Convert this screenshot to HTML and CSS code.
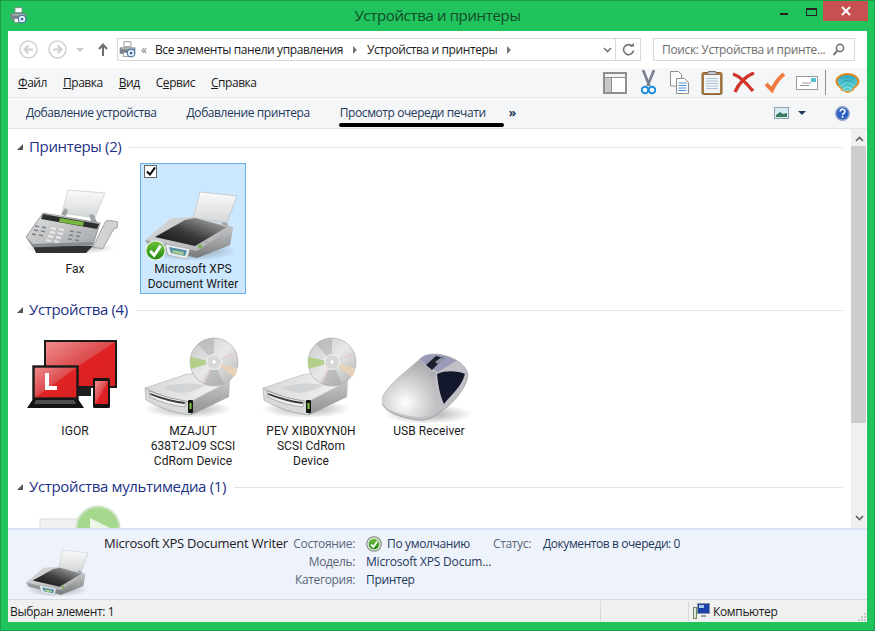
FILE: index.html
```html
<!DOCTYPE html>
<html lang="ru">
<head>
    <meta charset="UTF-8">
    <title>Устройства и принтеры</title>
    <link rel="stylesheet" href="styles.css">
</head>
<body>

<svg class="defs" width="0" height="0">
    <defs>
        <linearGradient id="paper" x1="0" y1="0" x2="0" y2="1"><stop offset="0" stop-color="#fbfbfb"/><stop offset="1" stop-color="#d3d6d8"/></linearGradient>
        <linearGradient id="printer-top" x1="0" y1="0" x2="1" y2="1"><stop offset="0" stop-color="#dcddde"/><stop offset="1" stop-color="#a2a5a8"/></linearGradient>
        <linearGradient id="printer-front" x1="0" y1="0" x2="0" y2="1"><stop offset="0" stop-color="#c4c6c8"/><stop offset="1" stop-color="#77797b"/></linearGradient>
        <linearGradient id="printer-well" x1="1" y1="0" x2="0" y2="1"><stop offset="0" stop-color="#b5b6b7"/><stop offset=".55" stop-color="#3a3a3a"/><stop offset="1" stop-color="#0c0c0c"/></linearGradient>
        <linearGradient id="fax-top" x1="0" y1="0" x2="1" y2="1"><stop offset="0" stop-color="#e2e3e4"/><stop offset="1" stop-color="#a0a3a6"/></linearGradient>
        <linearGradient id="red" x1="0" y1="0" x2="1" y2="1"><stop offset="0" stop-color="#ef8f8f"/><stop offset=".5" stop-color="#dc4a4c"/><stop offset=".51" stop-color="#e02325"/><stop offset="1" stop-color="#d81f22"/></linearGradient>
        <linearGradient id="drive-top" x1="0" y1="0" x2="1" y2="0"><stop offset="0" stop-color="#d7d8d8"/><stop offset="1" stop-color="#f4f4f4"/></linearGradient>
        <linearGradient id="drive-side" x1="0" y1="0" x2="0" y2="1"><stop offset="0" stop-color="#c6c7c7"/><stop offset="1" stop-color="#8e9090"/></linearGradient>
        <linearGradient id="disc" x1="0" y1="0" x2="1" y2="1"><stop offset="0" stop-color="#c8c8c8"/><stop offset=".5" stop-color="#e8e8e8"/><stop offset="1" stop-color="#b0b0b0"/></linearGradient>
        <radialGradient id="mouse-body" cx=".4" cy=".75" r=".8"><stop offset="0" stop-color="#ffffff"/><stop offset=".3" stop-color="#e2e2e2"/><stop offset="1" stop-color="#a4a4a8"/></radialGradient>
        <linearGradient id="green" x1="0" y1="0" x2="0" y2="1"><stop offset="0" stop-color="#6ec23a"/><stop offset="1" stop-color="#1f8a12"/></linearGradient>
        <linearGradient id="shell" x1="0" y1="0" x2="0" y2="1"><stop offset="0" stop-color="#2aa8c0"/><stop offset="1" stop-color="#80e8e0"/></linearGradient>
        <radialGradient id="blur-shadow"><stop offset="0" stop-color="#000" stop-opacity=".35"/><stop offset="1" stop-color="#000" stop-opacity="0"/></radialGradient>

        <symbol id="check-badge" viewBox="0 0 24 24">
            <circle cx="12" cy="12" r="11" fill="url(#green)" stroke="#e7f3df" stroke-width="1.4"/>
            <path d="M6 12.500l4.500 5L18 6.500" fill="none" stroke="#fff" stroke-width="3.400"/>
        </symbol>

        <symbol id="check-ring" viewBox="0 0 24 24">
            <circle cx="12" cy="12" r="11" fill="#dfe3dc" stroke="#7d8a7a" stroke-width="1.600"/>
            <circle cx="12" cy="12" r="8" fill="url(#green)"/>
            <path d="M7.500 12.500l3.500 4 6-8.500" fill="none" stroke="#fff" stroke-width="2.800"/>
        </symbol>

        <symbol id="printer" viewBox="0 0 92 72">
            <ellipse cx="46" cy="62" rx="46" ry="10" fill="url(#blur-shadow)"/>
            <path d="M50 25l-5 13 6 1 4-12zM79 28l5 10-5 2-4-11z" fill="#9da0a2"/>
            <path d="M55 3L92 7 82 34 48 29z" fill="url(#paper)" stroke="#b7babb" stroke-width=".6"/>
            <path d="M0 51L26 29 48 28 88 38 85 56 52 69 4 57z" fill="url(#printer-top)"/>
            <path d="M4 57L0 51 52 62 88 38 85 56 52 69z" fill="url(#printer-front)"/>
            <path d="M10 48L40 31 50 29 82 38 50 57z" fill="url(#printer-well)"/>
            <path d="M20 55L45 60 42 70 23 66z" fill="#e9edf0" stroke="#8a8a8a" stroke-width=".4"/>
            <path d="M24 58L42 61.500 40 67 26 64z" fill="#4f8fa8"/>
            <path d="M27 61L39 63 38 66 28 64z" fill="#a9c98a"/>
            <circle cx="55" cy="57.500" r="2" fill="#7ab04a"/>
            <circle cx="62" cy="53.500" r="1.800" fill="#a8abad"/>
        </symbol>

        <symbol id="fax" viewBox="0 0 92 66">
            <ellipse cx="44" cy="60" rx="46" ry="6" fill="url(#blur-shadow)"/>
            <path d="M42 2L79 5 69 30 36 25z" fill="url(#paper)" stroke="#c0c2c3" stroke-width=".6"/>
            <path d="M39 20l-4 7 5 1 2-6zM67 26l4 8-5 1-3-8z" fill="#9fa2a4"/>
            <path d="M6 56L67 58 60 65 10 65z" fill="#2f3132"/>
            <path d="M0 49L17 25 74 35 67 57 7 59z" fill="url(#fax-top)" stroke="#7d8082" stroke-width=".7"/>
            <path d="M1 50L7 56 67 54 67 57 7 59z" fill="#8a8d90"/>
            <path d="M17 26L73 36 71 41 15 31z" fill="#2b2f2e"/>
            <path d="M34 30L58 34 57 38 33 34z" fill="#79b63f"/>
            <path d="M9 38l4 .7M16 39l4 .7M8 42l4 .7M15 43l4 .7M6 46l4 .7M13 47l4 .7" stroke="#7d8184" stroke-width="1.500"/>
            <path d="M25 40l5 1M33 41l5 1M24 44l5 1M32 45l5 1M22 48l5 1M30 49l5 1M20 52l5 1M28 53l5 1" stroke="#e8eaeb" stroke-width="1.800"/>
            <path d="M44 43l4 .7M51 44l4 .7M43 47l4 .7M50 48l4 .7M42 51l4 .7M49 52l4 .7" stroke="#7d8184" stroke-width="1.300"/>
            <path d="M80 33c4-1 8 0 12 1l-1 6-3 .5-11 20-10-1 6-13 4-8z" fill="#d0d2d3" stroke="#85888b" stroke-width=".7"/>
        </symbol>

        <symbol id="devices" viewBox="0 0 90 70">
            <rect x="18" y="1" width="71" height="46" fill="url(#red)" stroke="#1a1a1a" stroke-width="2"/>
            <path d="M44 47h20v9H44z" fill="#202020"/>
            <rect x="6.500" y="26.500" width="44" height="32" fill="url(#red)" stroke="#1a1a1a" stroke-width="2.400"/>
            <path d="M18 33h4v13h8v4H18z" fill="#fff"/>
            <path d="M6 59h45l6 9H0z" fill="#141414"/>
            <path d="M9 60h38l2 4H7z" fill="#4d4d4d"/>
            <rect x="66" y="38" width="17" height="30" rx="1.500" fill="#141414"/>
            <rect x="68" y="41" width="13" height="23" fill="url(#red)"/>
        </symbol>

        <symbol id="cd-drive" viewBox="0 0 96 86">
            <ellipse cx="44" cy="74" rx="44" ry="9" fill="url(#blur-shadow)"/>
            <path d="M1 53L43 39Q70 37 86 46L46 67Q20 64 1 53z" fill="url(#drive-top)" stroke="#a6a8a8" stroke-width=".5"/>
            <path d="M20 52Q42 46 62 50 48 58 38 58 26 57 20 52z" fill="#c4c8cc" opacity=".6"/>
            <path d="M46 67L86 46 85 62 47 80z" fill="url(#drive-side)"/>
            <path d="M1 53Q20 64 46 67L47 80Q22 77 2 65z" fill="#d8d9d9" stroke="#8b8d8d" stroke-width=".5"/>
            <path d="M5 56Q24 64 42 66L41 72Q22 70 6 62z" fill="#f0f0f0" stroke="#777" stroke-width=".5"/>
            <path d="M6 58Q24 65 41 67L40.500 69Q24 67 6.500 60z" fill="#3a3c3c"/>
            <rect x="44" y="65" width="5" height="13" rx="1" fill="#151515"/>
            <rect x="45.500" y="68" width="2" height="6" fill="#7ccc3f"/>
            <circle cx="70" cy="27" r="24" fill="url(#disc)" stroke="#a2a2a2" stroke-width=".6"/>
            <path d="M70 27L46 22C46 26 46 30 47 34z" fill="#b4cf8a"/>
            <path d="M70 27L93 33C93 37 92 40 90 42z" fill="#e6d2b8"/>
            <path d="M70 27L54 9C58 6 64 3 70 3z" fill="#a8a8a8" opacity=".5"/>
            <path d="M70 27L60 49C66 51 74 51 80 49z" fill="#a0a0a0" opacity=".5"/>
            <path d="M70 27l23-9M70 27L59 48" stroke="#e6bcd0" stroke-width=".8"/>
            <circle cx="70" cy="27" r="7.500" fill="#d8d8d8" stroke="#f4f4f4" stroke-width="1"/>
            <circle cx="70" cy="27" r="2.400" fill="#fff" stroke="#b5b5b5" stroke-width=".5"/>
        </symbol>

        <symbol id="mouse-icon" viewBox="0 0 92 84">
            <ellipse cx="46" cy="70" rx="44" ry="10" fill="url(#blur-shadow)"/>
            <path d="M0 55C4 42 24 28 38 15 44 8 60 9 72 15 82 20 88 28 85 36 80 50 68 62 58 68 50 74 44 77 36 76 20 74-2 68 0 55z" fill="#c0c0c6" stroke="#8a8a90" stroke-width=".6"/>
            <path d="M55 30C64 26 76 27 83 30 80 42 70 50 62 60 58 52 56 40 55 30z" fill="#14182c"/>
            <path d="M38 15C44 9 62 9 74 17L56 28C50 24 44 22 38 15z" fill="#9a9ab8"/>
            <path d="M44 21L54 12 62 14 50 26z" fill="#1a2030"/>
            <path d="M53 18L59 13.500 63 15 56 20z" fill="#8f94a4"/>
            <path d="M0 55C4 42 24 28 38 16 44 24 50 26 54 29 52 40 54 52 58 62 50 71 44 73 36 73 20 71-2 66 0 55z" fill="url(#mouse-body)"/>
        </symbol>

        <symbol id="media" viewBox="0 0 82 46">
            <path d="M1 14h40v32H1z" fill="#f1f1f1" stroke="#dedede"/>
            <circle cx="59" cy="23" r="21.500" fill="#a6d88e" stroke="#cfe3c4" stroke-width="2"/>
            <path d="M51 13l20 10-20 12z" fill="#edf5e6"/>
        </symbol>

        <symbol id="mini-printer" viewBox="0 0 24 24">
            <path d="M7 1h10v7H7z" fill="#fff" stroke="#777"/>
            <path d="M1 9h22v9H1z" fill="#78828c"/>
            <path d="M3 10h18v2H3z" fill="#aeb5bb"/>
            <path d="M6 16h12v6H6z" fill="#fff" stroke="#777"/>
            <circle cx="17" cy="17" r="5.500" fill="#eaf3fb" stroke="#36689a" stroke-width="1.400"/>
            <circle cx="17" cy="17" r="2" fill="#36689a"/>
        </symbol>
    </defs>
</svg>

<div class="window">
    <div class="titlebar">
        <svg class="title-icon" width="17" height="17"><use href="#mini-printer"/></svg>
        <div class="title-text">Устройства и принтеры</div>
        <div class="window-controls">
            <div class="ctl-min"></div>
            <div class="ctl-max"></div>
            <div class="ctl-close">
                <svg width="10" height="10" viewBox="0 0 10 10"><path d="M1 1l8 8M9 1L1 9" stroke="#fff" stroke-width="2"/></svg>
            </div>
        </div>
    </div>

    <div class="client">
        <div class="navbar">
            <div class="nav-btn">
                <svg width="19" height="19" viewBox="0 0 19 19"><circle cx="9.500" cy="9.500" r="8.500" fill="#fff" stroke="#d0d0d0" stroke-width="1.500"/><path d="M14 9.500H6M9.500 5.500l-4 4 4 4" fill="none" stroke="#cfcfcf" stroke-width="2"/></svg>
            </div>
            <div class="nav-btn">
                <svg width="19" height="19" viewBox="0 0 19 19"><circle cx="9.500" cy="9.500" r="8.500" fill="#fff" stroke="#d0d0d0" stroke-width="1.500"/><path d="M5 9.500h8M9.500 5.500l4 4-4 4" fill="none" stroke="#cfcfcf" stroke-width="2"/></svg>
            </div>
            <div class="nav-drop"></div>
            <svg class="nav-up" width="10" height="13" viewBox="0 0 10 13"><path d="M5 13V2M1 6l4-4.500 4 4.500" fill="none" stroke="#6d6d6d" stroke-width="2"/></svg>

            <div class="address">
                <svg class="addr-icon" width="17" height="17"><use href="#mini-printer"/></svg>
                <span class="addr-more">&laquo;</span>
                <span class="crumb">Все элементы панели управления</span>
                <span class="crumb-arrow"></span>
                <span class="crumb">Устройства и принтеры</span>
                <span class="crumb-arrow"></span>
                <div class="addr-right">
                    <svg class="addr-chevron" width="9" height="6" viewBox="0 0 9 6"><path d="M1 1l3.500 3.500L8 1" fill="none" stroke="#777" stroke-width="1.600"/></svg>
                    <div class="addr-refresh">
                        <svg width="13" height="13" viewBox="0 0 13 13"><path d="M10.500 3.500a5 5 0 1 0 1 4" fill="none" stroke="#777" stroke-width="1.600"/><path d="M7.500 3.500h4.500V0z" fill="#777"/></svg>
                    </div>
                </div>
            </div>

            <div class="search">
                <span class="search-text">Поиск: Устройства и принте...</span>
                <svg width="13" height="13" viewBox="0 0 13 13"><circle cx="8" cy="5" r="3.600" fill="none" stroke="#777" stroke-width="1.600"/><path d="M5.500 7.500L1.500 12" stroke="#777" stroke-width="2"/></svg>
            </div>
        </div>

        <div class="menubar">
            <div class="menu-items">
                <span><u>Ф</u>айл</span>
                <span><u>П</u>равка</span>
                <span><u>В</u>ид</span>
                <span>С<u>е</u>рвис</span>
                <span><u>С</u>правка</span>
            </div>
            <div class="tools">
                <svg class="tool-panel" width="24" height="22" viewBox="0 0 24 22"><rect x="1" y="1" width="22" height="20" fill="#fff" stroke="#8f8f8f" stroke-width="2"/><rect x="2" y="2" width="20" height="4" fill="#f2f2f2"/><rect x="2" y="6" width="6" height="14" fill="#c8c8c8"/><path d="M8.500 6v15M1 5.500h22" stroke="#8f8f8f"/></svg>
                <svg class="tool-cut" width="15" height="25" viewBox="0 0 15 25"><path d="M2 0l6.500 16M13 0L6.500 16" stroke="#76808e" stroke-width="2.600"/><circle cx="4" cy="20" r="3.300" fill="none" stroke="#1d8fdc" stroke-width="2"/><circle cx="11" cy="20" r="3.300" fill="none" stroke="#1d8fdc" stroke-width="2"/></svg>
                <svg class="tool-copy" width="19" height="23" viewBox="0 0 19 23"><path d="M.5.500h8l3 3V15H.5z" fill="#fff" stroke="#8f8f8f"/><path d="M6.500 7.500h8l4 4v11h-12z" fill="#fff" stroke="#8f8f8f"/><path d="M8.500 12h8M8.500 14.500h8M8.500 17h8M8.500 19.500h8" stroke="#4a90d0"/></svg>
                <svg class="tool-paste" width="22" height="25" viewBox="0 0 22 25"><rect x="1" y="2.500" width="20" height="22" rx="1.500" fill="#a77a4a" stroke="#8a6033"/><rect x="3" y="5" width="16" height="18" fill="#f2f4f6"/><path d="M5 8.500h12M5 11h12M5 13.500h12M5 16h12M5 18.500h12" stroke="#aec0d4"/><path d="M7 1.500h8v3H7z" fill="#c9c9c9" stroke="#777"/></svg>
                <svg class="tool-del" width="23" height="21" viewBox="0 0 23 21"><path d="M1 2C7 4 12 8 21 19M22 1C14 4 7 11 3 20" fill="none" stroke="#d0342a" stroke-width="3.400"/></svg>
                <svg class="tool-ok" width="22" height="21" viewBox="0 0 22 21"><path d="M2 12l6 6C11 11 15 6 20 2" fill="none" stroke="#f07a42" stroke-width="4"/></svg>
                <svg class="tool-mail" width="22" height="14" viewBox="0 0 22 14"><rect x=".5" y=".5" width="21" height="13" fill="#fff" stroke="#9a9a9a"/><rect x="15" y="2" width="5" height="4" fill="#53bfd8"/><path d="M6 7h9M4 9.500h9" stroke="#9a9a9a"/></svg>
                <div class="tool-sep"></div>
                <svg class="tool-shell" width="25" height="20" viewBox="0 0 25 20"><path d="M12.500 0C19 0 25 4 24.500 9c-.3 3-3 5-4.500 6-1 2-2.500 3-2.500 3l-5 2-5-2S6 17 5 15C3.500 14 .8 12 .5 9 0 4 6 0 12.500 0z" fill="#e5871b"/><path d="M12.500 2C18 2 23 5 22.500 9c-.3 2-2.500 4-3.500 5l-3 4H9l-3-4C5 13 2.800 11 2.500 9 2 5 7 2 12.500 2z" fill="url(#shell)"/><path d="M4.500 12a9.500 9.500 0 0 1 16 0M7 15a6.500 6.500 0 0 1 11 0M9.500 17.500a3.500 3.500 0 0 1 6 0" fill="none" stroke="#1c93ac" stroke-width=".7"/></svg>
            </div>
        </div>

        <div class="commandbar">
            <span class="cmd">Добавление устройства</span>
            <span class="cmd">Добавление принтера</span>
            <span class="cmd">Просмотр очереди печати</span>
            <span class="cmd-more">&raquo;</span>
            <div class="cmd-right">
                <svg width="15" height="12" viewBox="0 0 15 12"><rect x=".5" y=".5" width="14" height="11" fill="#d9ecf5" stroke="#8fa1ad"/><path d="M2 8l4-3 3 2 4-1v4H2z" fill="#3b7d63"/></svg>
                <div class="cmd-drop"></div>
                <svg class="help" width="15" height="15" viewBox="0 0 15 15"><circle cx="7.500" cy="7.500" r="6.700" fill="#2f62c4" stroke="#8ea3c4" stroke-width="1.400"/><path d="M5.200 5.600c0-3 4.800-3 4.800-.2 0 1.800-2.500 2-2.500 3.700" fill="none" stroke="#fff" stroke-width="1.500"/><rect x="6.700" y="10" width="1.700" height="1.700" fill="#fff"/></svg>
            </div>
            <div class="queue-mark"></div>
        </div>

        <div class="main">
            <div class="content">
                <div class="group-head"><i class="tri"></i><span>Принтеры (2)</span><b></b></div>
                <div class="tiles">
                    <div class="tile">
                        <div class="tile-icon"><svg class="img-fax" width="92" height="66"><use href="#fax"/></svg></div>
                        <div class="tile-label">Fax</div>
                    </div>
                    <div class="tile selected">
                        <div class="tile-check">
                            <svg width="10" height="9" viewBox="0 0 10 9"><path d="M1 4.500l3 3 5-7" fill="none" stroke="#000" stroke-width="2"/></svg>
                        </div>
                        <div class="tile-icon">
                            <svg class="img-printer" width="92" height="72"><use href="#printer"/></svg>
                            <svg class="tile-badge" width="21" height="21"><use href="#check-badge"/></svg>
                        </div>
                        <div class="tile-label">Microsoft XPS<br>Document Writer</div>
                    </div>
                </div>

                <div class="group-head"><i class="tri"></i><span>Устройства (4)</span><b></b></div>
                <div class="tiles tiles-devices">
                    <div class="tile">
                        <div class="tile-icon"><svg class="img-devices" width="90" height="70"><use href="#devices"/></svg></div>
                        <div class="tile-label">IGOR</div>
                    </div>
                    <div class="tile">
                        <div class="tile-icon"><svg class="img-cd" width="96" height="86"><use href="#cd-drive"/></svg></div>
                        <div class="tile-label">MZAJUT<br>638T2JO9 SCSI<br>CdRom Device</div>
                    </div>
                    <div class="tile">
                        <div class="tile-icon"><svg class="img-cd" width="96" height="86"><use href="#cd-drive"/></svg></div>
                        <div class="tile-label">PEV XIB0XYN0H<br>SCSI CdRom<br>Device</div>
                    </div>
                    <div class="tile">
                        <div class="tile-icon"><svg class="img-mouse" width="92" height="84"><use href="#mouse-icon"/></svg></div>
                        <div class="tile-label">USB Receiver</div>
                    </div>
                </div>

                <div class="group-head"><i class="tri"></i><span>Устройства мультимедиа (1)</span><b></b></div>
                <div class="tiles">
                    <div class="tile">
                        <div class="tile-icon"><svg class="img-media" width="82" height="46"><use href="#media"/></svg></div>
                    </div>
                </div>
            </div>
            <div class="scrollbar">
                <svg class="scroll-up" width="9" height="6" viewBox="0 0 9 6"><path d="M1 5l3.500-3.500L8 5" fill="none" stroke="#606060" stroke-width="1.600"/></svg>
                <div class="scroll-thumb"></div>
                <svg class="scroll-down" width="9" height="6" viewBox="0 0 9 6"><path d="M1 1l3.500 3.500L8 1" fill="none" stroke="#606060" stroke-width="1.600"/></svg>
            </div>
        </div>

        <div class="details">
            <svg class="details-img" width="62" height="49"><use href="#printer"/></svg>
            <div class="details-name">Microsoft XPS Document Writer</div>
            <div class="details-grid">
                <span class="key">Состояние:</span>
                <span class="val val-state"><svg width="16" height="16"><use href="#check-ring"/></svg>По умолчанию</span>
                <span class="key">Статус:</span>
                <span class="val val-status">Документов в очереди: 0</span>
                <span class="key">Модель:</span>
                <span class="val val-wide val-latin">Microsoft XPS Docum...</span>
                <span class="key">Категория:</span>
                <span class="val val-wide">Принтер</span>
            </div>
        </div>

        <div class="statusbar">
            <div class="status-main">Выбран элемент: 1</div>
            <div class="status-mid"></div>
            <div class="status-pc">
                <svg width="17" height="16" viewBox="0 0 17 16"><rect x="4.500" y=".5" width="12" height="10" fill="#1b3fa8" stroke="#8a93a3"/><rect x="6" y="2" width="5" height="3" fill="#a9c8ee"/><path d="M8 12h5v2H8z" fill="#9aa1a8"/><rect x=".5" y="4.500" width="3" height="11" fill="#dfe5dc" stroke="#6c8a60"/></svg>
                Компьютер
            </div>
            <svg class="grip" width="9" height="9" viewBox="0 0 9 9"><path d="M7 1h2v2H7zM4 4h2v2H4zM7 4h2v2H7zM1 7h2v2H1zM4 7h2v2H4zM7 7h2v2H7z" fill="#c6c6c6"/></svg>
        </div>
    </div>
</div>

</body>
</html>
```

FILE: styles.css
```css
* {
    box-sizing: border-box;
}
html, body {
    margin: 0;
    height: 100%;
}
body {
    font-family: "Open Sans", "Noto Sans", sans-serif;
    font-size: 12px;
    letter-spacing: -0.35px;
    color: #1b1b1b;
    overflow: hidden;
}
.defs {
    position: absolute;
}
svg {
    display: block;
    flex: none;
}
.window {
    height: 631px;
    display: flex;
    flex-direction: column;
    background-color: #21c45c;
    border: 1px solid #1a9c4a;
    padding: 0 7px 8px 7px;
}
.titlebar {
    height: 30px;
    display: flex;
    align-items: flex-start;
    position: relative;
    margin: 0 -7px;
}
.title-icon {
    margin: 6px 0 0 9px;
}
.title-text {
    position: absolute;
    left: 0;
    right: 0;
    top: 4px;
    text-align: center;
    font-size: 15px;
    line-height: 20px;
    color: #124a2a;
}
.window-controls {
    margin-left: auto;
    display: flex;
    padding-right: 6px;
    position: relative;
}
.ctl-min {
    width: 8px;
    height: 2px;
    background-color: #222;
    margin: 12px 18px 0 0;
}
.ctl-max {
    width: 11px;
    height: 8px;
    border: 1px solid #222;
    border-top-width: 2px;
    margin: 7px 6px 0 0;
}
.ctl-close {
    width: 45px;
    height: 20px;
    background-color: #c75050;
    display: flex;
    align-items: center;
    justify-content: center;
}
.client {
    flex: 1;
    display: flex;
    flex-direction: column;
    background-color: #ffffff;
    min-height: 0;
}

/* address row */
.navbar {
    height: 37px;
    display: flex;
    align-items: center;
    padding-left: 11px;
    padding-right: 12px;
}
.nav-btn {
    margin-right: 10px;
}
.nav-drop {
    width: 0;
    height: 0;
    border: 4px solid transparent;
    border-top: 4px solid #c9c9c9;
    border-bottom: 0;
    margin: 0 14px 0 -1px;
}
.nav-up {
    margin-right: 9px;
}
.address {
    width: 524px;
    height: 23px;
    border: 1px solid #d9d9d9;
    display: flex;
    align-items: center;
    padding-left: 1px;
    white-space: nowrap;
}
.addr-icon {
    margin-right: 5px;
}
.addr-more {
    color: #777;
    width: 14px;
}
.crumb {
    letter-spacing: -0.4px;
}
.crumb-arrow {
    width: 0;
    height: 0;
    border: 4px solid transparent;
    border-left: 4px solid #777;
    border-right: 0;
    margin: 0 10px;
}
.addr-right {
    margin-left: auto;
    display: flex;
    align-items: center;
    height: 100%;
}
.addr-chevron {
    margin-right: 3px;
}
.addr-refresh {
    width: 25px;
    height: 100%;
    border-left: 1px solid #d9d9d9;
    display: flex;
    align-items: center;
    justify-content: center;
}
.search {
    width: 202px;
    height: 23px;
    margin-left: 12px;
    border: 1px solid #d9d9d9;
    display: flex;
    align-items: center;
    justify-content: space-between;
    padding: 0 9px 0 8px;
    white-space: nowrap;
}
.search-text {
    color: #6d6d6d;
}

/* menu and toolbar */
.menubar {
    height: 30px;
    display: flex;
    align-items: center;
    background-color: #f5f6f7;
    border-bottom: 1px solid #e3e5e8;
    padding-left: 10px;
}
.menu-items {
    display: flex;
    gap: 16px;
    letter-spacing: -0.45px;
}
.tools {
    margin-left: auto;
    display: flex;
    align-items: center;
    padding-right: 7px;
}
.tool-panel { margin-right: 14px; }
.tool-cut { margin-right: 14px; }
.tool-copy { margin-right: 12px; }
.tool-paste { margin-right: 9px; }
.tool-del { margin-right: 9px; }
.tool-ok { margin-right: 10px; }
.tool-mail { margin-right: 7px; }
.tool-sep {
    width: 1px;
    height: 25px;
    background-color: #8f8f8f;
    margin-right: 9px;
}
.commandbar {
    height: 31px;
    display: flex;
    align-items: center;
    background-color: #f5f6f7;
    border-bottom: 1px solid #e3e5e8;
    padding-left: 18px;
    position: relative;
    color: #1e395b;
}
.cmd {
    margin-right: 30px;
    margin-bottom: 2px;
    letter-spacing: -0.42px;
}
.cmd-more {
    font-weight: bold;
    margin-left: -7px;
    margin-bottom: 2px;
}
.queue-mark {
    position: absolute;
    left: 331px;
    top: 25px;
    width: 165px;
    height: 4px;
    border-radius: 2px;
    background-color: #000;
}
.cmd-right {
    margin-left: auto;
    display: flex;
    align-items: center;
    padding-right: 17px;
}
.cmd-drop {
    width: 0;
    height: 0;
    border: 4px solid transparent;
    border-top: 4px solid #1e395b;
    border-bottom: 0;
    margin: 0 29px 0 9px;
}

/* device list */
.main {
    flex: 1;
    display: flex;
    min-height: 0;
}
.content {
    flex: 1;
    overflow: hidden;
    padding: 7px 8px 0 9px;
}
.group-head {
    height: 22px;
    display: flex;
    align-items: center;
    font-size: 15px;
    color: #1e3287;
}
.group-head span {
    margin-top: -2px;
}
.group-head b {
    flex: 1;
    height: 1px;
    background-color: #e5e5e5;
    margin-left: 8px;
}
.tri {
    width: 0;
    height: 0;
    border-style: solid;
    border-width: 0 0 6px 6px;
    border-color: transparent transparent #555 transparent;
    margin-right: 6px;
}
.tiles {
    display: flex;
    gap: 12px;
    margin: 5px 0 5px 5px;
}
.tiles-devices {
    margin-top: 4px;
}
.tile {
    width: 106px;
    border: 1px solid transparent;
    padding-bottom: 1px;
    position: relative;
}
.tile.selected {
    background-color: #cce8ff;
    border-color: #6aaeea;
}
.tile-check {
    position: absolute;
    left: 3px;
    top: 1px;
    width: 13px;
    height: 13px;
    background-color: #fff;
    border: 1px solid #666;
    display: flex;
    align-items: center;
    justify-content: center;
}
.tile-icon {
    height: 98px;
    position: relative;
}
.tile-icon svg {
    position: absolute;
}
.img-fax { left: 3px; top: 24px; }
.img-printer { left: 4px; top: 25px; }
.img-devices { left: 4px; top: 14px; }
.img-cd { left: 3px; top: 9px; }
.img-mouse { left: 5px; top: 18px; }
.img-media { left: 16px; top: 1px; }
.tile-badge { left: 4px; top: 76px; }
.tile-label {
    font-family: Roboto, "Open Sans", sans-serif;
    letter-spacing: 0.05px;
    text-align: center;
    line-height: 15px;
    white-space: nowrap;
}

/* scrollbar */
.scrollbar {
    width: 16px;
    border-right: 1px solid #ffffff;
    background-color: #f0f0f0;
    position: relative;
}
.scroll-up {
    position: absolute;
    left: 4px;
    top: 7px;
}
.scroll-thumb {
    position: absolute;
    left: 0;
    right: 0;
    top: 17px;
    height: 277px;
    background-color: #cdcdcd;
}
.scroll-down {
    position: absolute;
    left: 4px;
    bottom: 7px;
}

/* details */
.details {
    height: 72px;
    background-color: #eef2fb;
    border-top: 1px solid #d3dfef;
    box-shadow: inset 0 2px 1px #e3ebf6;
    border-bottom: 1px solid #d9d9d9;
    padding-left: 18px;
    display: flex;
}
.details-img {
    margin-top: 19px;
}
.details-name {
    margin: 5px 0 0 16px;
    width: 189px;
    font-size: 13px;
    letter-spacing: -0.25px;
    line-height: 18px;
    white-space: nowrap;
}
.details-grid {
    display: grid;
    grid-template-columns: 62px 116px 38px auto;
    grid-auto-rows: 18px;
    column-gap: 11px;
    line-height: 18px;
    margin-top: 6px;
    height: 54px;
    color: #1e395b;
    white-space: nowrap;
}
.key {
    color: #5a6779;
    text-align: right;
}
.val-state {
    display: flex;
    align-items: center;
    gap: 5px;
}
.val-status {
    margin-left: 1px;
    letter-spacing: -0.42px;
}
.val-wide {
    grid-column: 2 / 5;
}
.val-latin {
    letter-spacing: -0.2px;
}

/* status bar */
.statusbar {
    height: 22px;
    background-color: #f0f0f0;
    display: flex;
    align-items: center;
    position: relative;
}
.status-main {
    width: 592px;
    padding-left: 2px;
}
.status-mid {
    width: 89px;
    height: 20px;
    border-left: 1px solid #d9d9d9;
    border-right: 1px solid #d9d9d9;
}
.status-pc {
    display: flex;
    align-items: center;
    gap: 3px;
    padding-left: 4px;
}
.grip {
    position: absolute;
    right: 1px;
    bottom: 1px;
}
```
